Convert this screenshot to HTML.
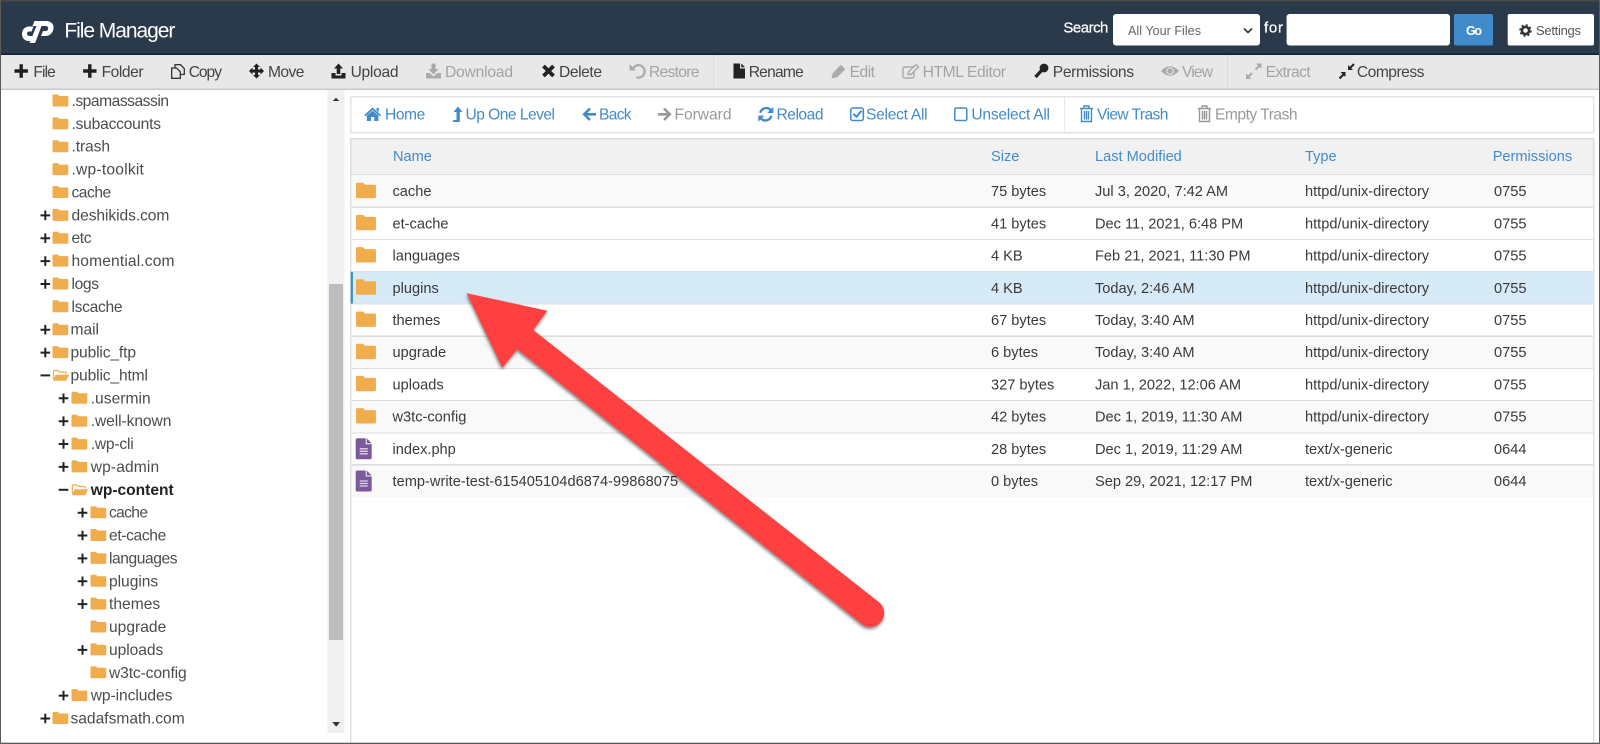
<!DOCTYPE html>
<html><head><meta charset="utf-8"><title>File Manager</title>
<style>
html,body{margin:0;padding:0;background:#fff;width:1600px;height:744px;overflow:hidden}
svg{display:block}
text{font-family:"Liberation Sans",sans-serif;white-space:pre}
.tb text{font-size:15.6px;fill:#444}
.tb text.d{fill:#a3a3a3}
.nv text{font-size:15.6px;fill:#428bca}
.nv text.d{fill:#999}
.tr text{font-size:15.6px;fill:#4c4c4c}
.th text{font-size:14.6px;fill:#428bca}
.td text{font-size:14.6px;fill:#3a3a3a}
</style></head><body>
<svg width="1600" height="744" viewBox="0 0 1600 744" xmlns="http://www.w3.org/2000/svg">
<defs>
<path id="ff" fill="#f0ad4e" d="M1.5,0H7L9,2H18.5A1.5,1.5 0 0 1 20,3.5V13.9A1.5,1.5 0 0 1 18.5,15.4H1.5A1.5,1.5 0 0 1 0,13.9V1.5A1.5,1.5 0 0 1 1.5,0Z"/>
<path id="tf" fill="#f0ad4e" d="M0.8,-0.9H5.3L6.8,0.6H14.6A1,1 0 0 1 15.6,1.6V10.1A1,1 0 0 1 14.6,11.1H0.8A1,1 0 0 1 -0.2,10.1V0.1A1,1 0 0 1 0.8,-0.9Z"/>
<g id="of"><path fill="none" stroke="#f0ad4e" stroke-width="1.2" d="M.7,9V1.6Q.7,.7 1.6,.7H5L6.5,2.3H12.5Q13.5,2.3 13.5,3.3V4.4"/><path fill="#f0ad4e" d="M3,5H16.5L13.5,11H0Z"/></g>
<path id="tp" fill="#222" d="M-1,-4.8h2v3.8h3.8v2h-3.8v3.8h-2v-3.8h-3.8v-2h3.8z"/>
<path id="tm" fill="#222" d="M-4.8,-1h9.6v2h-9.6z"/>
<g id="fi"><path fill="#7a5a9a" d="M1.5,0H10V6H16V19.5Q16,21 14.5,21H1.5Q0,21 0,19.5V1.5Q0,0 1.5,0Z"/><path fill="#7a5a9a" d="M11,0L16,5H11Z"/><path stroke="#ddd6e6" stroke-width="1.3" d="M4,10.5H12M4,13H12M4,15.5H12"/></g>
<filter id="sh" x="-5%" y="-5%" width="110%" height="110%"><feDropShadow dx="-0.5" dy="2" stdDeviation="1.5" flood-color="#000" flood-opacity=".5"/></filter>
</defs>

<!-- header -->
<rect width="1600" height="55" fill="#2a3a4b"/>
<rect width="1600" height="1.5" fill="#4a4a4a"/>
<rect y="53.5" width="1600" height="1.5" fill="#16202c"/>
<path fill="#fff" d="M34.5,21H46C51.5,21 54,24.5 53.5,28.5C53,33 49.5,36 45,36H41L43,31H45.5C47.2,31 48.2,29.8 48.2,28.5C48.2,27 47.3,26 45.5,26H41.5L35.5,42C35,43 34.5,43 33,43H29.5L36.5,26H32.5Z"/>
<path fill="#fff" d="M33.5,26.5H29C25,26.5 22,29.8 22,34C22,38.3 25,41 28.5,41H30.5L32.5,36H29.5C28,36 27,35.2 27,33.8C27,32.5 28.2,31.5 29.5,31.5H31.5Z"/>
<text x="64.4" y="37.5" font-size="21" fill="#fff" textLength="111">File Manager</text>
<text x="1063.4" y="32.5" font-size="15" fill="#fff" stroke="#fff" stroke-width=".25" textLength="45">Search</text>
<rect x="1113" y="14" width="147" height="31.5" rx="3" fill="#fff"/>
<text x="1128" y="35" font-size="12.6" fill="#666" textLength="73">All Your Files</text>
<path fill="none" stroke="#333" stroke-width="1.6" d="M1244,28.5L1248,32.5L1252,28.5"/>
<text x="1264" y="32.5" font-size="15" fill="#fff" stroke="#fff" stroke-width=".25" textLength="19">for</text>
<rect x="1286.6" y="14" width="163.4" height="31.5" rx="3" fill="#fff"/>
<rect x="1454" y="14" width="39" height="31.5" rx="2" fill="#428bca"/>
<text x="1466" y="35" font-size="12.5" font-weight="bold" fill="#fff" textLength="16">Go</text>
<rect x="1507.7" y="14" width="86.3" height="31.5" rx="2" fill="#fff"/>
<circle cx="1525.5" cy="30.5" r="3.6" fill="none" stroke="#333" stroke-width="2.6"/>
<circle cx="1525.5" cy="30.5" r="5.5" fill="none" stroke="#333" stroke-width="1.5" stroke-dasharray="2.16 2.16"/>
<text x="1536" y="35" font-size="13" fill="#555" textLength="45">Settings</text>

<!-- toolbar -->
<rect y="55" width="1600" height="33.5" fill="#e8e8e8"/>
<rect y="88.5" width="1600" height="1.5" fill="#c9c9c9"/>
<path stroke="#cfcfcf" stroke-dasharray="1 1" d="M713.5,55V88M1227.5,55V88"/>
<g transform="translate(0,-3)">
<g class="tb">
<text x="33.4" y="80" textLength="22.4">File</text>
<text x="101.6" y="80" textLength="42">Folder</text>
<text x="188.7" y="80" textLength="33.3">Copy</text>
<text x="268" y="80" textLength="36.4">Move</text>
<text x="350.6" y="80" textLength="47.9">Upload</text>
<text class="d" x="445" y="80" textLength="68">Download</text>
<text x="559" y="80" textLength="43">Delete</text>
<text class="d" x="649" y="80" textLength="50.4">Restore</text>
<text x="748.7" y="80" textLength="55.1">Rename</text>
<text class="d" x="849.6" y="80" textLength="25.4">Edit</text>
<text class="d" x="922.6" y="80" textLength="83.4">HTML Editor</text>
<text x="1052.8" y="80" textLength="81.2">Permissions</text>
<text class="d" x="1182" y="80" textLength="31">View</text>
<text class="d" x="1265.6" y="80" textLength="45.1">Extract</text>
<text x="1356.9" y="80" textLength="67.5">Compress</text>
</g>
<path fill="#1f1f1f" d="M19.5,67.3h3.4v5h5v3.4h-5v5h-3.4v-5h-5v-3.4h5zM88.1,67.3h3.4v5h5v3.4h-5v5h-3.4v-5h-5v-3.4h5z"/>
<g fill="none" stroke="#333" stroke-width="1.3"><path d="M175,71V67.7H180.5L184.3,71.5V77.5H180.3"/><path d="M171.7,71H176.5L180.3,74.8V81.3H171.7Z"/></g>
<path fill="#222" d="M256.5,66.5L260,70H258V72.5H260.5V70.5L264,74L260.5,77.5V75.5H258V78H260L256.5,81.5L253,78H255V75.5H252.5V77.5L249,74L252.5,70.5V72.5H255V70H253Z"/>
<path fill="#222" d="M338.5,66.5L343,71.5H340.3V77H336.7V71.5H334ZM331.5,76H335.5V78.5H341.5V76H345.5V81.5H331.5Z"/>
<path fill="#aaa" d="M431.5,66.5H435.5V72H438.5L433.5,77.5L428.5,72H431.5ZM426,76H429.5L433.5,79.5L437.5,76H441V81.5H426Z"/>
<path stroke="#222" stroke-width="3.8" d="M543.5,69L553.5,79M553.5,69L543.5,79"/>
<path fill="none" stroke="#aaa" stroke-width="2.2" d="M633,71.5A6.2,6.2 0 1 1 636.5,80.3"/><path fill="#aaa" d="M629.5,67V73.5H636Z"/>
<path fill="#222" d="M733.5,66.5H740V71.5H745V81.5H733.5ZM741.2,66.5L745,70.3H741.2Z"/>
<path fill="#aaa" d="M831.5,81.5L832.8,76L841,67.8L845.3,72.2L837.2,80.3Z"/>
<g fill="none" stroke="#aaa" stroke-width="1.4"><path d="M913,70H905Q903,70 903,72V79Q903,81 905,81H912Q914,81 914,79V75"/><path d="M908,77.5L908.5,75L916,67.5L918.5,70L911,77.5Z"/></g>
<circle cx="1044" cy="71" r="4.4" fill="#222"/><path stroke="#222" stroke-width="3.2" d="M1041.5,73.5L1035.5,80"/>
<path fill="#aaa" d="M1161,74Q1170,64.5 1179,74Q1170,83.5 1161,74Z"/><circle cx="1170" cy="74" r="3.8" fill="#e8e8e8"/><circle cx="1170" cy="74" r="2.7" fill="#aaa"/>
<path fill="#aaa" d="M1261.5,66.5V72L1256,66.5ZM1246,82V76.5L1251.5,82Z"/><path stroke="#aaa" stroke-width="2" d="M1248,80L1252,76M1255.5,72.5L1259.5,68.5"/>
<path fill="#222" d="M1345.5,75V80L1340.5,75ZM1348,73V68L1353,73Z"/><path stroke="#222" stroke-width="2" d="M1339.5,81.5L1343.5,77.5M1350,71L1354,67"/>
</g>

<!-- tree scrollbar -->
<rect x="327.5" y="90" width="17" height="643" fill="#f0f0f0"/>
<rect x="329" y="284" width="14" height="356" fill="#bdbdbd"/>
<path fill="#333" d="M332.7,101L336,97.7L339.3,101Z"/>
<path fill="#333" d="M332.3,722H340L336.2,726.7Z"/>

<!-- tree -->
<g class="tr">
<text x="71.5" y="106" textLength="97.5">.spamassassin</text>
<text x="71.5" y="128.9" textLength="89.5">.subaccounts</text>
<text x="71.5" y="151.7" textLength="38.5">.trash</text>
<text x="71.5" y="174.6" textLength="72.4">.wp-toolkit</text>
<text x="71.5" y="197.5" textLength="39.7">cache</text>
<text x="71.5" y="220.4" textLength="97.9">deshikids.com</text>
<text x="71.5" y="243.2" textLength="20">etc</text>
<text x="71.5" y="266.1" textLength="103">homential.com</text>
<text x="71.5" y="289" textLength="27.5">logs</text>
<text x="71.5" y="311.8" textLength="51">lscache</text>
<text x="70.5" y="334.7" textLength="28.5">mail</text>
<text x="70.5" y="357.6" textLength="65.5">public_ftp</text>
<text x="70.5" y="380.4" textLength="77.5">public_html</text>
<text x="90.7" y="403.3" textLength="60">.usermin</text>
<text x="90.7" y="426.2" textLength="80.7">.well-known</text>
<text x="90.7" y="449.1" textLength="43">.wp-cli</text>
<text x="90.7" y="471.9" textLength="68.5">wp-admin</text>
<text x="90.7" y="494.8" textLength="83" font-weight="bold" style="fill:#222">wp-content</text>
<text x="109" y="517.7" textLength="39">cache</text>
<text x="109" y="540.5" textLength="57.3">et-cache</text>
<text x="109" y="563.4" textLength="68.6">languages</text>
<text x="109" y="586.3" textLength="49.2">plugins</text>
<text x="109" y="609.1" textLength="51.2">themes</text>
<text x="109" y="632" textLength="57.3">upgrade</text>
<text x="109" y="654.9" textLength="54.3">uploads</text>
<text x="109" y="677.8" textLength="77.7">w3tc-config</text>
<text x="90.7" y="700.6" textLength="81.7">wp-includes</text>
<text x="70.5" y="723.5" textLength="114.2">sadafsmath.com</text>
</g>
<use href="#tf" x="52.7" y="95.4"/><use href="#tf" x="52.7" y="118.3"/><use href="#tf" x="52.7" y="141.1"/><use href="#tf" x="52.7" y="164"/><use href="#tf" x="52.7" y="186.9"/><use href="#tf" x="52.7" y="209.8"/><use href="#tf" x="52.7" y="232.6"/><use href="#tf" x="52.7" y="255.5"/><use href="#tf" x="52.7" y="278.4"/><use href="#tf" x="52.7" y="301.2"/><use href="#tf" x="52.7" y="324.1"/><use href="#tf" x="52.7" y="347"/><use href="#of" x="52.7" y="369.8"/>
<use href="#tf" x="71.7" y="392.7"/><use href="#tf" x="71.7" y="415.6"/><use href="#tf" x="71.7" y="438.5"/><use href="#tf" x="71.7" y="461.3"/><use href="#of" x="71.7" y="484.2"/>
<use href="#tf" x="90.7" y="507.1"/><use href="#tf" x="90.7" y="529.9"/><use href="#tf" x="90.7" y="552.8"/><use href="#tf" x="90.7" y="575.7"/><use href="#tf" x="90.7" y="598.5"/><use href="#tf" x="90.7" y="621.4"/><use href="#tf" x="90.7" y="644.3"/><use href="#tf" x="90.7" y="667.2"/>
<use href="#tf" x="71.7" y="690"/><use href="#tf" x="52.7" y="712.9"/>
<use href="#tp" x="45.3" y="215.35"/><use href="#tp" x="45.3" y="238.2"/><use href="#tp" x="45.3" y="261.1"/><use href="#tp" x="45.3" y="284"/><use href="#tp" x="45.3" y="329.7"/><use href="#tp" x="45.3" y="352.6"/><use href="#tm" x="45.3" y="375.4"/>
<use href="#tp" x="63.5" y="398.3"/><use href="#tp" x="63.5" y="421.2"/><use href="#tp" x="63.5" y="444"/><use href="#tp" x="63.5" y="466.9"/><use href="#tm" x="63.5" y="489.8"/>
<use href="#tp" x="82.5" y="512.7"/><use href="#tp" x="82.5" y="535.5"/><use href="#tp" x="82.5" y="558.4"/><use href="#tp" x="82.5" y="581.3"/><use href="#tp" x="82.5" y="604.1"/><use href="#tp" x="82.5" y="649.9"/>
<use href="#tp" x="63.5" y="695.6"/><use href="#tp" x="45.3" y="718.5"/>

<!-- right panel frame -->
<rect x="350" y="138" width="1.5" height="606" fill="#e2e2e2"/>
<rect x="1593" y="138" width="1.5" height="606" fill="#e2e2e2"/>
<rect x="350.7" y="96.7" width="1243" height="36" fill="#fff" stroke="#e4e4e4" stroke-width="1.5"/>
<path stroke="#d5d5d5" stroke-dasharray="1 1" d="M1064.5,97V132"/>
<g class="nv">
<text x="385" y="119.7" textLength="40.3">Home</text>
<text x="465.5" y="119.7" textLength="89.5">Up One Level</text>
<text x="599" y="119.7" textLength="32.6">Back</text>
<text class="d" x="674.5" y="119.7" textLength="57">Forward</text>
<text x="776.5" y="119.7" textLength="47">Reload</text>
<text x="866" y="119.7" textLength="61.6">Select All</text>
<text x="971.4" y="119.7" textLength="78.6">Unselect All</text>
<text x="1097" y="119.7" textLength="71.4">View Trash</text>
<text class="d" x="1215" y="119.7" textLength="82.6">Empty Trash</text>
</g>
<path fill="#428bca" d="M372.6,107.5L381,115L379.8,116.3L372.6,110L365.5,116.3L364.3,115ZM366.8,115.5L372.6,110.8L378.4,115.5V121H374.3V117H371V121H366.8ZM376.5,108H378.8V112.3L376.5,110.3Z"/>
<path fill="#428bca" d="M458,106.5L462.5,112H459.8V122H452.5L453.5,120H456.5V112H453.5Z"/>
<path fill="none" stroke="#428bca" stroke-width="2.6" d="M596,114.3H585M590,108.5L584.2,114.3L590,120"/>
<path fill="none" stroke="#999" stroke-width="2.6" d="M658,114.3H669M664,108.5L669.8,114.3L664,120"/>
<path fill="none" stroke="#428bca" stroke-width="2.4" d="M760.3,112.8A6,6 0 0 1 770.8,110.3M771.3,115.8A6,6 0 0 1 760.8,118.3"/>
<path fill="#428bca" d="M773.3,106.8V113H767.2ZM758.3,121.8V115.6H764.4Z"/>
<rect x="850.8" y="108" width="12.5" height="12.5" rx="2" fill="none" stroke="#428bca" stroke-width="1.5"/>
<path fill="none" stroke="#428bca" stroke-width="2" d="M853.5,113.8L856.5,116.8L861.5,110.8"/>
<rect x="954.8" y="108" width="12" height="12.5" rx="1.5" fill="none" stroke="#428bca" stroke-width="1.5"/>
<g fill="none" stroke="#428bca" stroke-width="1.4"><path d="M1080,108.5H1093M1084,108V106H1089V108"/><path d="M1081.5,109V121.5H1091.5V109M1084.5,111V119.5M1086.5,111V119.5M1088.5,111V119.5"/></g>
<g fill="none" stroke="#999" stroke-width="1.4"><path d="M1198,108.5H1211M1202,108V106H1207V108"/><path d="M1199.5,109V121.5H1209.5V109M1202.5,111V119.5M1204.5,111V119.5M1206.5,111V119.5"/></g>

<!-- table -->
<rect x="350.7" y="138.7" width="1243" height="36.3" fill="#f1f1f1" stroke="#dcdcdc" stroke-width="1.5"/>
<g class="th">
<text x="393" y="161">Name</text><text x="991" y="161">Size</text><text x="1095" y="161">Last Modified</text><text x="1305" y="161">Type</text><text x="1492.7" y="161">Permissions</text>
</g>
<rect x="351.5" y="175" width="1241.5" height="32.2" fill="#f9f9f9"/>
<rect x="351.5" y="271.6" width="1241.5" height="32.2" fill="#d6eaf7"/>
<rect x="350.7" y="271.6" width="2.2" height="32.2" fill="#3a8fc8"/>
<rect x="351.5" y="336" width="1241.5" height="32.2" fill="#f9f9f9"/>
<rect x="351.5" y="400.4" width="1241.5" height="32.2" fill="#f9f9f9"/>
<rect x="351.5" y="464.8" width="1241.5" height="32.2" fill="#f9f9f9"/>
<g fill="#ddd">
<rect x="351.5" y="206.5" width="1241.5" height="1.6"/>
<rect x="351.5" y="239" width="1241.5" height="1"/>
<rect x="351.5" y="271" width="1241.5" height="1"/>
<rect x="351.5" y="303.5" width="1241.5" height="1"/>
<rect x="351.5" y="335.4" width="1241.5" height="1.6"/>
<rect x="351.5" y="368" width="1241.5" height="1"/>
<rect x="351.5" y="400" width="1241.5" height="1"/>
<rect x="351.5" y="432.5" width="1241.5" height="1"/>
<rect x="351.5" y="464" width="1241.5" height="1.6"/>
</g>
<use href="#ff" x="356" y="182.7"/><use href="#ff" x="356" y="214.9"/><use href="#ff" x="356" y="247.1"/><use href="#ff" x="356" y="279.3"/><use href="#ff" x="356" y="311.5"/><use href="#ff" x="356" y="343.7"/><use href="#ff" x="356" y="375.9"/><use href="#ff" x="356" y="408.1"/>
<use href="#fi" x="355.7" y="438.3"/><use href="#fi" x="355.7" y="470.5"/>
<g class="td" transform="translate(0,0.5)">
<text x="392.5" y="195.7">cache</text><text x="991" y="195.7">75 bytes</text><text x="1095" y="195.7">Jul 3, 2020, 7:42 AM</text><text x="1305" y="195.7">httpd/unix-directory</text><text x="1494" y="195.7">0755</text>
<text x="392.5" y="227.9">et-cache</text><text x="991" y="227.9">41 bytes</text><text x="1095" y="227.9">Dec 11, 2021, 6:48 PM</text><text x="1305" y="227.9">httpd/unix-directory</text><text x="1494" y="227.9">0755</text>
<text x="392.5" y="260.1">languages</text><text x="991" y="260.1">4 KB</text><text x="1095" y="260.1">Feb 21, 2021, 11:30 PM</text><text x="1305" y="260.1">httpd/unix-directory</text><text x="1494" y="260.1">0755</text>
<text x="392.5" y="292.3">plugins</text><text x="991" y="292.3">4 KB</text><text x="1095" y="292.3">Today, 2:46 AM</text><text x="1305" y="292.3">httpd/unix-directory</text><text x="1494" y="292.3">0755</text>
<text x="392.5" y="324.5">themes</text><text x="991" y="324.5">67 bytes</text><text x="1095" y="324.5">Today, 3:40 AM</text><text x="1305" y="324.5">httpd/unix-directory</text><text x="1494" y="324.5">0755</text>
<text x="392.5" y="356.7">upgrade</text><text x="991" y="356.7">6 bytes</text><text x="1095" y="356.7">Today, 3:40 AM</text><text x="1305" y="356.7">httpd/unix-directory</text><text x="1494" y="356.7">0755</text>
<text x="392.5" y="388.9">uploads</text><text x="991" y="388.9">327 bytes</text><text x="1095" y="388.9">Jan 1, 2022, 12:06 AM</text><text x="1305" y="388.9">httpd/unix-directory</text><text x="1494" y="388.9">0755</text>
<text x="392.5" y="421.1">w3tc-config</text><text x="991" y="421.1">42 bytes</text><text x="1095" y="421.1">Dec 1, 2019, 11:30 AM</text><text x="1305" y="421.1">httpd/unix-directory</text><text x="1494" y="421.1">0755</text>
<text x="392.5" y="453.3">index.php</text><text x="991" y="453.3">28 bytes</text><text x="1095" y="453.3">Dec 1, 2019, 11:29 AM</text><text x="1305" y="453.3">text/x-generic</text><text x="1494" y="453.3">0644</text>
<text x="392.5" y="485.5" textLength="285.6">temp-write-test-615405104d6874-99868075</text><text x="991" y="485.5">0 bytes</text><text x="1095" y="485.5">Sep 29, 2021, 12:17 PM</text><text x="1305" y="485.5">text/x-generic</text><text x="1494" y="485.5">0644</text>
</g>

<!-- arrow -->
<path filter="url(#sh)" fill="#ff4040" d="M466.7,293.3L547.3,310.7L533.3,330L880,603A14,14 0 0 1 863,625L517.3,349.3L502.3,367.7Z"/>

<!-- outer frame -->
<rect x="0" y="0" width="1" height="744" fill="#5a5a5a"/>
<rect x="1599" y="0" width="1" height="744" fill="#5a5a5a"/>
<rect x="0" y="742.7" width="1600" height="1.3" fill="#5a5a5a"/>
</svg>
</body></html>
